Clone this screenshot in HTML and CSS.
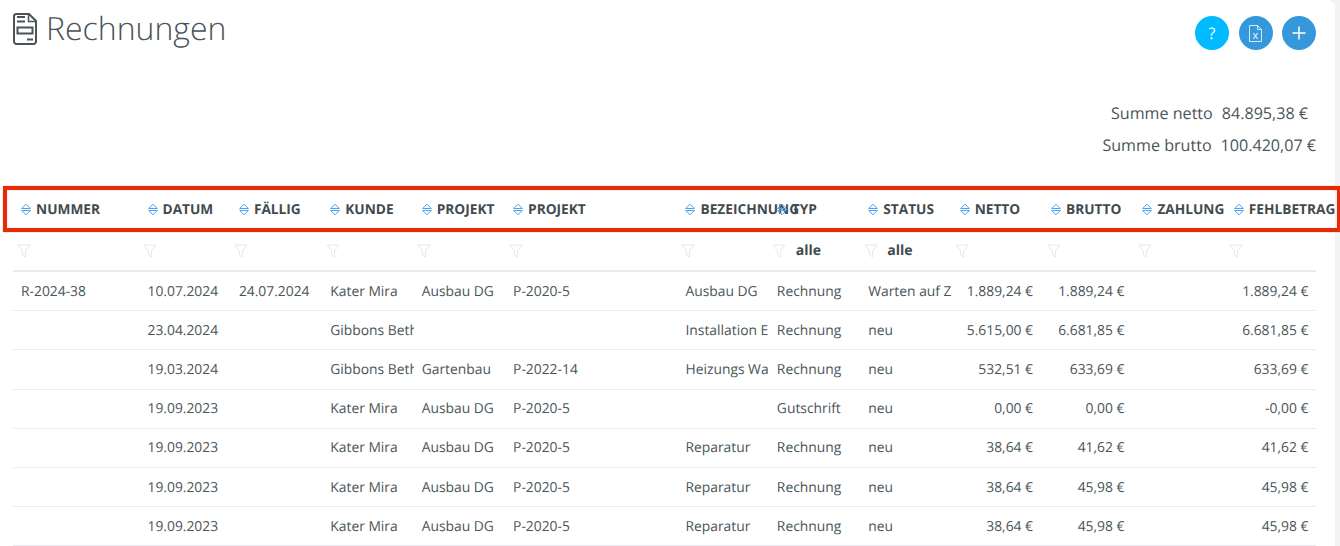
FILE: index.html
```html
<!DOCTYPE html>
<html lang="de">
<head>
<meta charset="utf-8">
<title>Rechnungen</title>
<link rel="stylesheet" href="styles.css">
</head>
<body>
<main class="card">
  <header class="top">
    <h1 class="title">
      <svg class="title-icon" viewBox="0 0 24 32" width="24" height="32"><path d="M3 1H16L23 8V28.500a2.500 2.500 0 0 1-2.500 2.500H3.500A2.500 2.500 0 0 1 1 28.500V3.500A2.500 2.500 0 0 1 3 1Z" fill="none" stroke="#4a5358" stroke-width="2"/><path d="M15.500 1.500V8.500H22.500" fill="none" stroke="#4a5358" stroke-width="1.500"/><path d="M4 4H12M4 8.500H12M14 26.500H20" fill="none" stroke="#4a5358" stroke-width="2"/><rect x="4.500" y="14.500" width="15" height="6" fill="none" stroke="#4a5358" stroke-width="2"/></svg>
      Rechnungen
    </h1>
    <div class="actions">
      <span class="round help">?</span>
      <span class="round">
        <svg viewBox="0 0 13 17" width="13" height="17"><path d="M.5.500H8.500L12.500 4.500V16.500H.5Z M8.500.500V4.500H12.500" fill="none" stroke="#fff" stroke-width=".8"/><text x="6.500" y="14" class="x-mark">x</text></svg>
      </span>
      <span class="round plus">
        <svg viewBox="0 0 14 14" width="14" height="14"><path d="M7 .5V13.500M.5 7H13.500" stroke="#fff" stroke-width="1.500" fill="none"/></svg>
      </span>
    </div>
  </header>

  <dl class="totals">
    <div class="total"><dt>Summe netto</dt><dd>84.895,38 €</dd></div>
    <div class="total"><dt>Summe brutto</dt><dd>100.420,07 €</dd></div>
  </dl>

  <div class="table">
    <div class="row head">
      <div class="th"><svg class="sort" viewBox="0 0 10 13"><path d="M.7 5.500 5 1.200l4.300 4.300Z" /><path d="M.7 7.500 5 11.800l4.300-4.300Z" /></svg>NUMMER</div>
      <div class="th"><svg class="sort" viewBox="0 0 10 13"><path d="M.7 5.500 5 1.200l4.300 4.300Z" /><path d="M.7 7.500 5 11.800l4.300-4.300Z" /></svg>DATUM</div>
      <div class="th"><svg class="sort" viewBox="0 0 10 13"><path d="M.7 5.500 5 1.200l4.300 4.300Z" /><path d="M.7 7.500 5 11.800l4.300-4.300Z" /></svg>FÄLLIG</div>
      <div class="th"><svg class="sort" viewBox="0 0 10 13"><path d="M.7 5.500 5 1.200l4.300 4.300Z" /><path d="M.7 7.500 5 11.800l4.300-4.300Z" /></svg>KUNDE</div>
      <div class="th"><svg class="sort" viewBox="0 0 10 13"><path d="M.7 5.500 5 1.200l4.300 4.300Z" /><path d="M.7 7.500 5 11.800l4.300-4.300Z" /></svg>PROJEKT</div>
      <div class="th"><svg class="sort" viewBox="0 0 10 13"><path d="M.7 5.500 5 1.200l4.300 4.300Z" /><path d="M.7 7.500 5 11.800l4.300-4.300Z" /></svg>PROJEKT</div>
      <div class="th"><svg class="sort" viewBox="0 0 10 13"><path d="M.7 5.500 5 1.200l4.300 4.300Z" /><path d="M.7 7.500 5 11.800l4.300-4.300Z" /></svg>BEZEICHNUNG</div>
      <div class="th"><svg class="sort" viewBox="0 0 10 13"><path d="M.7 5.500 5 1.200l4.300 4.300Z" /><path d="M.7 7.500 5 11.800l4.300-4.300Z" /></svg>TYP</div>
      <div class="th"><svg class="sort" viewBox="0 0 10 13"><path d="M.7 5.500 5 1.200l4.300 4.300Z" /><path d="M.7 7.500 5 11.800l4.300-4.300Z" /></svg>STATUS</div>
      <div class="th"><svg class="sort" viewBox="0 0 10 13"><path d="M.7 5.500 5 1.200l4.300 4.300Z" /><path d="M.7 7.500 5 11.800l4.300-4.300Z" /></svg>NETTO</div>
      <div class="th"><svg class="sort" viewBox="0 0 10 13"><path d="M.7 5.500 5 1.200l4.300 4.300Z" /><path d="M.7 7.500 5 11.800l4.300-4.300Z" /></svg>BRUTTO</div>
      <div class="th"><svg class="sort" viewBox="0 0 10 13"><path d="M.7 5.500 5 1.200l4.300 4.300Z" /><path d="M.7 7.500 5 11.800l4.300-4.300Z" /></svg>ZAHLUNG</div>
      <div class="th"><svg class="sort" viewBox="0 0 10 13"><path d="M.7 5.500 5 1.200l4.300 4.300Z" /><path d="M.7 7.500 5 11.800l4.300-4.300Z" /></svg>FEHLBETRAG</div>
    </div>
    <div class="row filters">
      <div class="fc"><svg class="funnel" viewBox="0 0 14 14"><path d="M1 1h12L8.500 7v6L5.500 11V7Z"/></svg></div>
      <div class="fc"><svg class="funnel" viewBox="0 0 14 14"><path d="M1 1h12L8.500 7v6L5.500 11V7Z"/></svg></div>
      <div class="fc"><svg class="funnel" viewBox="0 0 14 14"><path d="M1 1h12L8.500 7v6L5.500 11V7Z"/></svg></div>
      <div class="fc"><svg class="funnel" viewBox="0 0 14 14"><path d="M1 1h12L8.500 7v6L5.500 11V7Z"/></svg></div>
      <div class="fc"><svg class="funnel" viewBox="0 0 14 14"><path d="M1 1h12L8.500 7v6L5.500 11V7Z"/></svg></div>
      <div class="fc"><svg class="funnel" viewBox="0 0 14 14"><path d="M1 1h12L8.500 7v6L5.500 11V7Z"/></svg></div>
      <div class="fc"><svg class="funnel" viewBox="0 0 14 14"><path d="M1 1h12L8.500 7v6L5.500 11V7Z"/></svg></div>
      <div class="fc"><svg class="funnel" viewBox="0 0 14 14"><path d="M1 1h12L8.500 7v6L5.500 11V7Z"/></svg><b>alle</b></div>
      <div class="fc"><svg class="funnel" viewBox="0 0 14 14"><path d="M1 1h12L8.500 7v6L5.500 11V7Z"/></svg><b>alle</b></div>
      <div class="fc"><svg class="funnel" viewBox="0 0 14 14"><path d="M1 1h12L8.500 7v6L5.500 11V7Z"/></svg></div>
      <div class="fc"><svg class="funnel" viewBox="0 0 14 14"><path d="M1 1h12L8.500 7v6L5.500 11V7Z"/></svg></div>
      <div class="fc"><svg class="funnel" viewBox="0 0 14 14"><path d="M1 1h12L8.500 7v6L5.500 11V7Z"/></svg></div>
      <div class="fc"><svg class="funnel" viewBox="0 0 14 14"><path d="M1 1h12L8.500 7v6L5.500 11V7Z"/></svg></div>
    </div>
    <div class="row data">
      <div class="td">R-2024-38</div><div class="td">10.07.2024</div><div class="td">24.07.2024</div><div class="td">Kater Mira</div><div class="td">Ausbau DG</div><div class="td">P-2020-5</div><div class="td">Ausbau DG</div><div class="td">Rechnung</div><div class="td">Warten auf Z</div><div class="td num">1.889,24 €</div><div class="td num">1.889,24 €</div><div class="td"></div><div class="td num end">1.889,24 €</div>
    </div>
    <div class="row data">
      <div class="td"></div><div class="td">23.04.2024</div><div class="td"></div><div class="td">Gibbons Bethany</div><div class="td"></div><div class="td"></div><div class="td">Installation Elektro</div><div class="td">Rechnung</div><div class="td">neu</div><div class="td num">5.615,00 €</div><div class="td num">6.681,85 €</div><div class="td"></div><div class="td num end">6.681,85 €</div>
    </div>
    <div class="row data">
      <div class="td"></div><div class="td">19.03.2024</div><div class="td"></div><div class="td">Gibbons Bethany</div><div class="td">Gartenbau</div><div class="td">P-2022-14</div><div class="td">Heizungs Wartung</div><div class="td">Rechnung</div><div class="td">neu</div><div class="td num">532,51 €</div><div class="td num">633,69 €</div><div class="td"></div><div class="td num end">633,69 €</div>
    </div>
    <div class="row data">
      <div class="td"></div><div class="td">19.09.2023</div><div class="td"></div><div class="td">Kater Mira</div><div class="td">Ausbau DG</div><div class="td">P-2020-5</div><div class="td"></div><div class="td">Gutschrift</div><div class="td">neu</div><div class="td num">0,00 €</div><div class="td num">0,00 €</div><div class="td"></div><div class="td num end">-0,00 €</div>
    </div>
    <div class="row data">
      <div class="td"></div><div class="td">19.09.2023</div><div class="td"></div><div class="td">Kater Mira</div><div class="td">Ausbau DG</div><div class="td">P-2020-5</div><div class="td">Reparatur</div><div class="td">Rechnung</div><div class="td">neu</div><div class="td num">38,64 €</div><div class="td num">41,62 €</div><div class="td"></div><div class="td num end">41,62 €</div>
    </div>
    <div class="row data">
      <div class="td"></div><div class="td">19.09.2023</div><div class="td"></div><div class="td">Kater Mira</div><div class="td">Ausbau DG</div><div class="td">P-2020-5</div><div class="td">Reparatur</div><div class="td">Rechnung</div><div class="td">neu</div><div class="td num">38,64 €</div><div class="td num">45,98 €</div><div class="td"></div><div class="td num end">45,98 €</div>
    </div>
    <div class="row data">
      <div class="td"></div><div class="td">19.09.2023</div><div class="td"></div><div class="td">Kater Mira</div><div class="td">Ausbau DG</div><div class="td">P-2020-5</div><div class="td">Reparatur</div><div class="td">Rechnung</div><div class="td">neu</div><div class="td num">38,64 €</div><div class="td num">45,98 €</div><div class="td"></div><div class="td num end">45,98 €</div>
    </div>
    <div class="highlight"></div>
  </div>
</main>
</body>
</html>
```
FILE: styles.css
```css
* { box-sizing: border-box; }
html, body { margin: 0; height: 100%; overflow: hidden; background: #f3f4f6; }
body { font-family: "Open Sans", sans-serif; color: #4a5559; text-rendering: geometricPrecision; }
.card { position: relative; width: 1335px; height: 546px; background: #fff; border-top-right-radius: 8px; padding: 0 19px 0 13px; }
.top { display: flex; justify-content: space-between; height: 97px; }
.title { margin: 9px 0 0; display: flex; align-items: flex-start; gap: 9px; height: 44px; font-size: 32px; line-height: 40px; font-weight: 300; color: #4a5358; }
.title-icon { margin-top: 4px; flex: none; }
.actions { display: flex; gap: 9.500px; margin-top: 16px; height: 34px; }
.round { width: 34px; height: 34px; border-radius: 50%; background: #3498db; color: #fff; display: flex; align-items: center; justify-content: center; font-size: 16px; }
.help { background: #00bbff; }
.x-mark { font-family: "Open Sans", sans-serif; font-size: 11px; fill: #fff; text-anchor: middle; }
.totals { margin: 0; height: 89px; }
.total { display: flex; justify-content: flex-end; height: 32px; align-items: center; font-size: 16.100px; gap: 9px; }
.total dt, .total dd { margin: 0; }
.total:first-child { padding-right: 8px; }
.table { position: relative; }
.row { display: grid; grid-template-columns: 126.500px 91.400px 91.400px 91.400px 91.400px 172.400px 91.400px 91.400px 91.400px 91.400px 91.400px 91.400px 90.600px; }
.head { height: 46px; align-items: center; }
.th { display: flex; align-items: center; padding-left: 8px; font-size: 13.700px; font-weight: 700; color: #3f4b4f; white-space: nowrap; }
.sort { width: 10px; height: 13px; margin-right: 5px; flex: none; fill: none; stroke: #4aa3ee; stroke-width: 1; }
.filters { height: 40px; border-bottom: 2px solid #e9ebee; align-items: center; padding-bottom: 1px; }
.fc { display: flex; align-items: center; padding-left: 3.500px; font-size: 14px; }
.fc b { margin-left: 9.500px; color: #3f4b4f; }
.funnel { width: 14px; height: 14px; flex: none; fill: none; stroke: #e6e8ea; stroke-width: 1; }
.data { height: 39.200px; border-bottom: 1px solid #e9ebee; align-items: center; }
.td { padding: 0 8px; font-size: 13.850px; color: #4a5559; white-space: nowrap; overflow: hidden; }
.num { text-align: right; padding-right: 10px; }
.end { padding-right: 8px; }
.highlight { position: absolute; left: -10px; top: 0; width: 1338px; height: 46px; border: 4px solid #e62a06; box-shadow: 0 0 1px rgba(230, 42, 6, .6), inset 0 0 1px rgba(230, 42, 6, .6); pointer-events: none; }
```
